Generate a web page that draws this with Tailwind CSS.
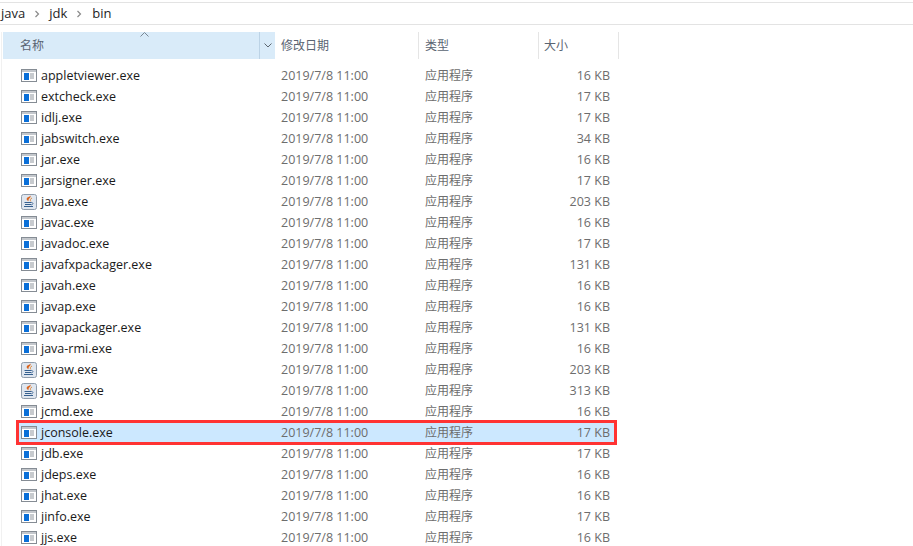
<!DOCTYPE html>
<html lang="en">
<head>
  <meta charset="UTF-8" />
  <title>bin</title>
  <script src="https://cdn.jsdelivr.net/npm/@tailwindcss/browser@4"></script>
</head>
<body class="bg-white h-screen overflow-hidden font-['Open_Sans','Noto_Sans_CJK_SC',sans-serif] text-[12px]">

  <!-- address bar -->
  <div class="mt-[2px] h-[23px] border-y border-[#e3e3e3] flex items-center text-[13px] text-[#1e1e1e]">
    <span class="ml-[1px]">java</span>
    <svg class="ml-[9px] mr-[9px]" width="6" height="8" viewBox="0 0 6 8"><path d="M1.5 1l3 3-3 3" fill="none" stroke="#8a8a8a" stroke-width="1.2"/></svg>
    <span>jdk</span>
    <svg class="ml-[9px] mr-[10px]" width="6" height="8" viewBox="0 0 6 8"><path d="M1.5 1l3 3-3 3" fill="none" stroke="#8a8a8a" stroke-width="1.2"/></svg>
    <span>bin</span>
  </div>

  <!-- file list -->
  <div class="ml-[1px] border-l border-[#f1f1f1] pl-[1px]">
    <div class="mt-[7px] flex h-[27px] text-[#5a6472]">
      <div class="relative w-[272px] bg-[#d9ebf9] flex items-center">
        <span class="ml-[17px]">名称</span>
        <svg class="absolute left-[137px] top-0" width="9" height="5" viewBox="0 0 9 5"><path d="M.5 4.500l4-4 4 4" fill="none" stroke="#7a8794"/></svg>
        <div class="ml-auto w-[16px] h-full border-l border-[#bcd3e6] flex items-center justify-center">
          <svg width="8" height="5" viewBox="0 0 8 5"><path d="M.5.5L4 4 7.500.5" fill="none" stroke="#5c6670"/></svg>
        </div>
      </div>
      <div class="w-[144px] pl-[6px] flex items-center border-r border-[#e5e5e5]">修改日期</div>
      <div class="w-[120px] pl-[6px] flex items-center border-r border-[#e5e5e5]">类型</div>
      <div class="w-[80px] pl-[5px] flex items-center border-r border-[#e5e5e5]">大小</div>
    </div>
    <div id="rows" class="mt-[6px] ml-[15px] w-[597px]"></div>
  </div>

<script>
  const files = [
    ["appletviewer.exe", "16 KB"], ["extcheck.exe", "17 KB"], ["idlj.exe", "17 KB"],
    ["jabswitch.exe", "34 KB"], ["jar.exe", "16 KB"], ["jarsigner.exe", "17 KB"],
    ["java.exe", "203 KB", 1], ["javac.exe", "16 KB"], ["javadoc.exe", "17 KB"],
    ["javafxpackager.exe", "131 KB"], ["javah.exe", "16 KB"], ["javap.exe", "16 KB"],
    ["javapackager.exe", "131 KB"], ["java-rmi.exe", "16 KB"], ["javaw.exe", "203 KB", 1],
    ["javaws.exe", "313 KB", 1], ["jcmd.exe", "16 KB"], ["jconsole.exe", "17 KB"],
    ["jdb.exe", "17 KB"], ["jdeps.exe", "16 KB"], ["jhat.exe", "16 KB"],
    ["jinfo.exe", "17 KB"], ["jjs.exe", "16 KB"]
  ];

  const exeIcon = `<svg width="16" height="13" viewBox="0 0 16 13">
    <rect x=".5" y=".5" width="15" height="12" fill="#fff" stroke="#858c94"/>
    <rect x="1" y="1" width="14" height="2" fill="#c3c7cc"/>
    <rect x="3" y="4" width="5" height="7" fill="#0a6fd8"/>
    <path d="M9 5h4M9 7h4M9 9h4" stroke="#8f969e"/>
  </svg>`;

  const javaIcon = `<svg width="16" height="16" viewBox="0 0 16 16">
    <rect x=".5" y=".5" width="15" height="15" rx="2" fill="#dfe6ef" stroke="#8f9cab"/>
    <path d="M9.500 1.500c1 2.500-3 3.200-1.800 5.800-2-1-2.600-2.300-1.600-3.600C7.200 2.800 9 2.800 9.500 1.500z" fill="#d9641e"/>
    <path d="M11 4c-1.800.8-2 2-1.200 3.400" fill="none" stroke="#e08a3a"/>
    <path d="M3.500 8.500h7M4 10.500h6M3 12.500h9" stroke="#35608f"/>
    <path d="M10.500 8.500c2 0 2 2.200-.5 2.400" fill="none" stroke="#35608f" stroke-width=".8"/>
  </svg>`;

  document.getElementById("rows").innerHTML = files.map(([name, size, isJava]) => {
    const selected = name === "jconsole.exe";
    return `<div class="h-[21px] flex items-center ${selected ? "bg-[#cce8ff] outline-3 -outline-offset-1 outline-[#ff3333]" : ""}">
      <span class="w-[16px] flex justify-center ml-[3px] mr-[4px] shrink-0">${isJava ? javaIcon : exeIcon}</span>
      <span class="w-[240px] pt-[2px] text-[12.5px] text-[#1a1a1a]">${name}</span>
      <span class="w-[144px] pt-[2px] text-[12.5px] text-[#6d6d6d]">2019/7/8 11:00</span>
      <span class="w-[80px] text-[#6d6d6d]">应用程序</span>
      <span class="w-[105px] pt-[2px] text-[12.5px] text-right text-[#6d6d6d]">${size}</span>
    </div>`;
  }).join("");
</script>

</body>
</html>
